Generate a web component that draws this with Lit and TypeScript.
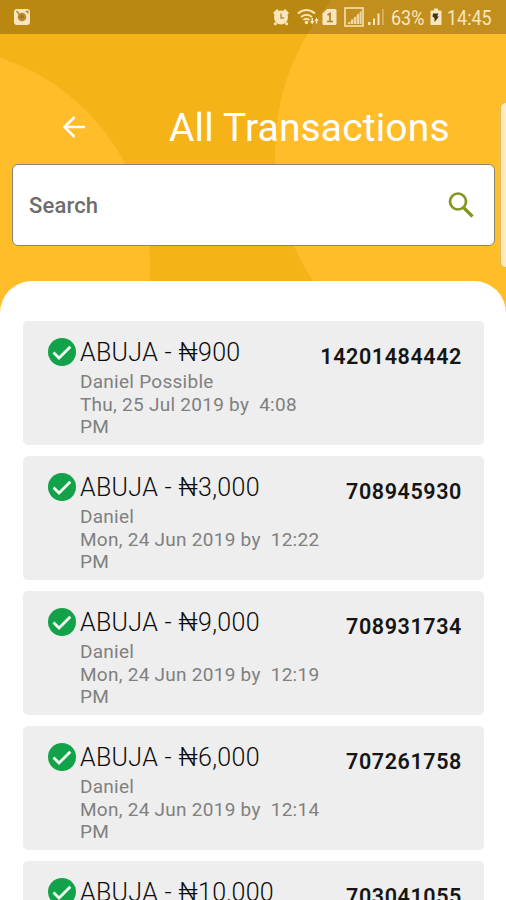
import { LitElement, html, svg, css } from "lit";
import { customElement, property } from "lit/decorators.js";

interface Transaction {
  title: string;
  name: string;
  date: string;
  reference: string;
}

const TRANSACTIONS: Transaction[] = [
  { title: "ABUJA - ₦900", name: "Daniel Possible", date: "Thu, 25 Jul 2019 by  4:08 PM", reference: "14201484442" },
  { title: "ABUJA - ₦3,000", name: "Daniel", date: "Mon, 24 Jun 2019 by  12:22 PM", reference: "708945930" },
  { title: "ABUJA - ₦9,000", name: "Daniel", date: "Mon, 24 Jun 2019 by  12:19 PM", reference: "708931734" },
  { title: "ABUJA - ₦6,000", name: "Daniel", date: "Mon, 24 Jun 2019 by  12:14 PM", reference: "707261758" },
  { title: "ABUJA - ₦10,000", name: "", date: "", reference: "703041055" },
];

@customElement("status-bar")
class StatusBar extends LitElement {
  static styles = css`
    :host {
      display: flex;
      align-items: center;
      height: 34px;
      box-sizing: border-box;
      padding: 0 13px 0 13px;
      background: rgba(0, 0, 0, 0.24);
      color: #f9e6bd;
      font-size: 19.5px;
      line-height: 34px;
    }
    svg { display: block; flex: none; fill: currentColor; }
    .spacer { flex: 1; }
    .text { display: block; white-space: nowrap; padding-top: 3px; }
    .percent { width: 33px; margin-left: 6px; }
    .time { width: 46px; margin-left: 5px; }
    .squeeze { display: inline-block; transform: scaleX(0.92); transform-origin: 0 50%; }
    .gap { margin-left: 7px; }
    .battery { margin-left: 6px; }
    .near { margin-left: 3px; }
  `;

  render() {
    return html`
      <svg width="18" height="18" viewBox="0 0 18 18">
        <rect x="1" y="1" width="16" height="16" rx="3" />
        <circle cx="9" cy="9" r="4.300" fill="#b58c35" />
        <circle cx="9" cy="8.700" r="2" fill="#a07720" />
        <path d="M3.500 3 6.500 6.500M12.500 3.500H14.800V5.500" fill="none" stroke="#b58c35" stroke-width="1.600" />
      </svg>
      <span class="spacer"></span>
      <svg width="18" height="18" viewBox="0 0 18 18">
        <circle cx="9" cy="9.500" r="7" />
        <path d="M1 5 5 1 7 3 3 7ZM17 5 13 1 11 3 15 7ZM3 14 5.500 16 3 17.500 1.500 16ZM15 14 12.500 16 15 17.500 16.500 16Z" />
        <path d="M9 5.500V10H12" fill="none" stroke="#b5913f" stroke-width="1.400" />
      </svg>
      <svg class="gap" width="22" height="18" viewBox="0 0 22 18">
        <g fill="none" stroke="currentColor" stroke-width="2">
          <path d="M1 5.500Q9.500 -1.500 18 5.500" />
          <path d="M4 9Q9.500 4.500 15 9" />
          <path d="M6.500 12Q9.500 9.500 12.500 12" />
        </g>
        <circle cx="9.500" cy="14.500" r="1.700" />
        <path d="M13 13H14.500V10H16V13H17.500L15.200 16.500ZM17.500 13 19.500 9.500 21.500 13H20.200V15.500H18.800V13Z" />
      </svg>
      <svg class="near" width="15" height="18" viewBox="0 0 15 18">
        <path d="M5 1H13Q14.500 1 14.500 2.500V15.500Q14.500 17 13 17H2Q.5 17 .5 15.500V5.500Z" />
        <path d="M5.500 7 8 5.500V13.500M5 13.500H11" fill="none" stroke="#ad8127" stroke-width="1.700" />
      </svg>
      <svg class="gap" width="20" height="20" viewBox="0 0 20 20">
        <rect x="1" y="1" width="18" height="18" fill="none" stroke="currentColor" stroke-width="1.500" />
        <path d="M3.500 17 17.500 3.500V17Z" opacity=".35" />
        <path d="M4 17V15H6V17ZM7 17V12.500H9V17ZM10 17V10H12V17ZM13 17V7H15V17ZM16 17V4.500H17.500V17Z" opacity=".75" />
      </svg>
      <svg class="near" width="18" height="18" viewBox="0 0 18 18">
        <path d="M1 17V14H3.500V17ZM6 17V10.500H8V17ZM10.500 17V5.500H12.500V17Z" />
        <path d="M15 1H16.800V17H15Z" opacity=".4" />
      </svg>
      <span class="text percent"><span class="squeeze">63%</span></span>
      <svg class="battery" width="12" height="18" viewBox="0 0 12 18">
        <path d="M4 .5H8V2.500H10.500Q11.500 2.500 11.500 3.500V16Q11.500 17 10.500 17H1.500Q.5 17 .5 16V3.500Q.5 2.500 1.500 2.500H4Z" />
        <path d="M3 5.500H8.500L7 8.500H9L4.500 14V10L2.500 8.500Z" fill="#3f3213" />
      </svg>
      <span class="text time"><span class="squeeze">14:45</span></span>
    `;
  }
}

@customElement("transaction-card")
class TransactionCard extends LitElement {
  @property({ attribute: false }) item!: Transaction;

  static styles = css`
    :host {
      display: flex;
      align-items: flex-start;
      box-sizing: border-box;
      height: 124px;
      padding: 16px 22px 0 24px;
      border-radius: 5px;
      background: #eeeeee;
    }
    .check { display: block; flex: none; width: 30px; height: 30px; margin-right: 3px; }
    .details { width: 241px; flex: none; padding-top: 1px; }
    .title {
      font-size: 25px;
      line-height: 30px;
      font-weight: 300;
      letter-spacing: 0.32px;
      color: #0c0c0c;
      white-space: nowrap;
    }
    .sub {
      font-size: 19px;
      line-height: 22.5px;
      letter-spacing: 0.27px;
      color: #808080;
      white-space: pre-wrap;
    }
    .name { padding-top: 3px; }
    .reference {
      flex: 1;
      min-width: 0;
      display: flex;
      justify-content: flex-end;
      padding-top: 8px;
      font-size: 21.5px;
      line-height: 24px;
      font-weight: 600;
      letter-spacing: 0.6px;
      color: #151515;
    }
  `;

  render() {
    return html`
      <svg class="check" viewBox="0 0 30 30">
        <circle cx="15" cy="15" r="14" fill="#12a24a" />
        <path d="M6.500 15.500 12 21 23.300 9.700" fill="none" stroke="#f4fff4" stroke-width="2.800" />
      </svg>
      <div class="details">
        <div class="title">${this.item.title}</div>
        <div class="sub name">${this.item.name}</div>
        <div class="sub">${this.item.date}</div>
      </div>
      <div class="reference">${this.item.reference}</div>
    `;
  }
}

@customElement("app-root")
class AppRoot extends LitElement {
  static styles = css`
    :host {
      display: flex;
      flex-direction: column;
      position: relative;
      height: 900px;
      overflow: hidden;
      background: #f5b317;
      font-family: Roboto, "Liberation Sans", sans-serif;
    }
    .backdrop { position: absolute; top: 0; left: 0; width: 100%; height: 330px; }
    status-bar { position: relative; flex: none; }
    .header {
      position: relative;
      flex: none;
      display: flex;
      align-items: center;
      height: 130px;
      box-sizing: border-box;
      padding: 56px 0 0 62px;
    }
    .back { display: block; width: 24px; height: 24px; }
    h1 {
      margin: 1px 0 0 83px;
      font-size: 39px;
      line-height: 46px;
      font-weight: 400;
      letter-spacing: 0.15px;
      color: #fff;
      white-space: nowrap;
    }
    .search {
      position: relative;
      flex: none;
      display: flex;
      align-items: center;
      justify-content: space-between;
      box-sizing: border-box;
      height: 82px;
      margin: 0 11px 0 12px;
      padding: 0 19px 0 16px;
      border: 1px solid #8a846f;
      border-radius: 6px;
      background: #fff;
      color: #6d6d6d;
      font-size: 22px;
      font-weight: 500;
      letter-spacing: 0.15px;
    }
    .search svg { display: block; width: 28px; height: 28px; }
    .sheet {
      position: relative;
      flex: 1;
      display: flex;
      flex-direction: column;
      gap: 11px;
      margin-top: 35px;
      padding: 40px 22px 0 23px;
      min-height: 0;
      border-radius: 32px 32px 0 0;
      background: #fff;
      overflow: hidden;
    }
    transaction-card { flex: none; }
    .edge-handle {
      position: absolute;
      top: 102px;
      right: -6px;
      width: 12px;
      height: 166px;
      box-sizing: border-box;
      border: 1px solid #e3b95c;
      border-radius: 6px;
      background: #ffebb9;
    }
  `;

  render() {
    return html`
      <svg class="backdrop" viewBox="0 0 506 330">
        ${svg`<circle cx="-68" cy="265" r="218" fill="#ffbd2a" />
        <circle cx="510" cy="153" r="235" fill="#ffbd2a" />`}
      </svg>
      <status-bar></status-bar>
      <div class="header">
        <svg class="back" viewBox="0 0 24 24" fill="none" stroke="#fff" stroke-width="2.500">
          <path d="M23 12H3M12.500 2 2.500 12 12.500 22" />
        </svg>
        <h1>All Transactions</h1>
      </div>
      <div class="search">
        <span>Search</span>
        <svg viewBox="0 0 28 28" fill="none" stroke="#85961f" stroke-width="2.700">
          <circle cx="11" cy="10.500" r="8" />
          <path d="M16.500 16.500 25.500 25.500" stroke-width="3.200" />
        </svg>
      </div>
      <div class="sheet">
        ${TRANSACTIONS.map((item) => html`<transaction-card .item=${item}></transaction-card>`)}
      </div>
      <div class="edge-handle"></div>
    `;
  }
}
